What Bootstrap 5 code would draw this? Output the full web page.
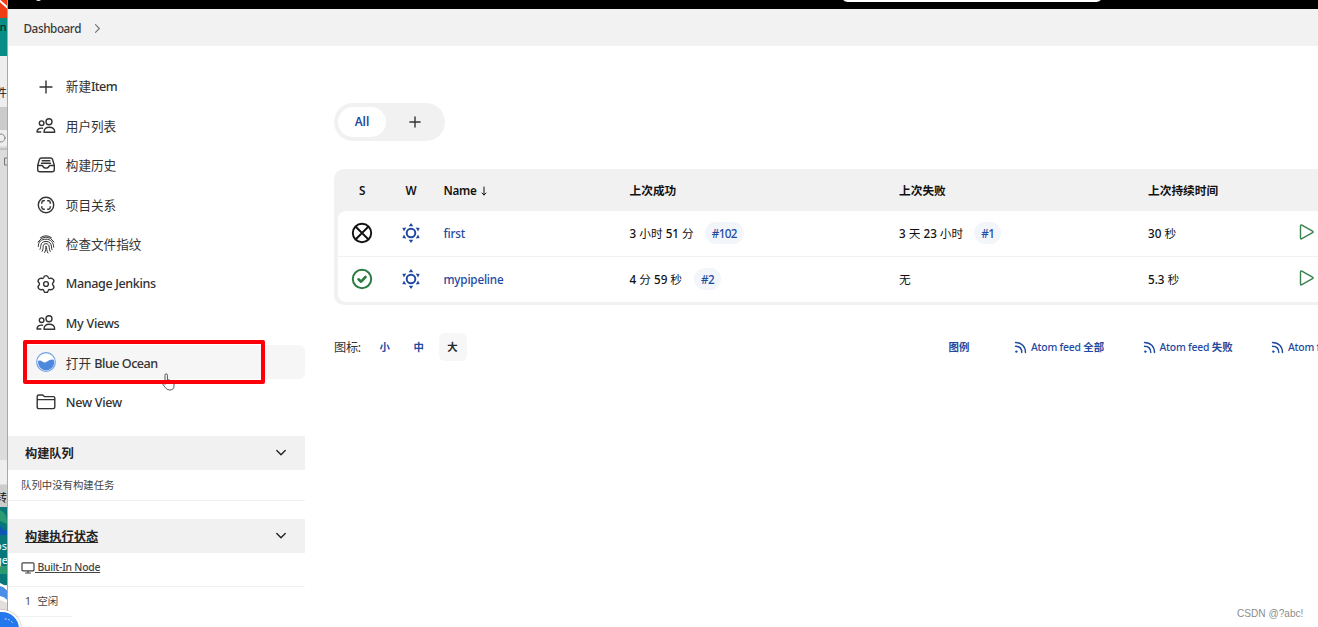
<!DOCTYPE html>
<html lang="zh-CN">
<head>
<meta charset="utf-8">
<title>Dashboard [Jenkins]</title>
<link href="https://cdn.jsdelivr.net/npm/bootstrap@5.3.0/dist/css/bootstrap.min.css" rel="stylesheet">
<style>
body{font-family:"Noto Sans","Noto Sans CJK SC",sans-serif;font-size:12.6px;line-height:1.4;color:#333;height:627px;overflow:hidden;background:#fff}
svg{fill:none;stroke:currentColor;stroke-width:1.4;stroke-linecap:round;stroke-linejoin:round;flex:none;display:block}
a{color:#1f4a9f;text-decoration:none}
.desk{width:8px;flex:none;overflow:hidden;border-right:1px solid #a9a9a9;background:#dcdcdc}
.desk svg{stroke:none}
.app{min-width:0;overflow:hidden}
.topbar{height:9px;background:#000;flex:none;position:relative;overflow:hidden}
.searchbox{position:absolute;left:833px;top:-22px;width:262px;height:24px;border-radius:7px;background:#fff}
.logo-bit{position:absolute;left:28px;top:-3px;width:5px;height:4px;border-radius:2px;background:#ddd}
.crumbs{height:37px;background:#f2f2f3;padding:1px 0 0 15.5px;font-size:11.7px;font-weight:500;flex:none;letter-spacing:-.42px;color:#3a3a3a}
.side{width:297px;flex:none;padding-top:21px}
.task{height:39.4px;padding:0 0 0 16px;color:#333}
.task .inner{height:34px;padding-left:11.5px;gap:10.3px;border-radius:6px;width:281px}
.task .inner>span{padding-top:1px}
.task.on .inner{background:#f6f6f6}
.en{font-weight:500;letter-spacing:-.4px}
.pane-h{height:34px;background:#f1f1f1;padding:0 18px 0 17px;font-size:12.2px;font-weight:600;color:#222}
.pane-h>span{padding-top:2px}
.pane-row{border-bottom:1px solid #f1f1f1;font-size:10.4px;padding:1px 0 0 13px;color:#444}
.main{padding:56.5px 0 0 29px;width:1120px;flex:none}
.tabs{height:38px;width:111px;border-radius:19px;background:#f1f1f1;padding:4px}
.tab-on{width:48px;height:30px;border-radius:15px;background:#fff;font-size:11.8px;font-weight:600}
.jobs{margin-top:28px;background:#f1f1f1;border-radius:10px;padding:0 4px 4px;height:136px;font-size:11.7px;color:#111}
.jrow{display:grid;grid-template-columns:48.5px 49px 194px 269.5px 249px 151px 1fr;align-items:center;background:#fff;height:45px;margin-bottom:1px}
.jrow.h{background:none;height:42px;font-weight:600;margin:0;padding-top:1px}
.jrow>:nth-child(-n+2){justify-self:center;margin-top:-1px}
.jrow.h>:nth-child(-n+2){margin-top:0}
.jrow>:nth-child(3){margin-left:8px}
.jrow>a{padding-top:1px;letter-spacing:-.2px;font-weight:500}
.jrow>svg:last-child{margin-top:-2px}
.jrow.a{border-radius:8px 8px 0 0}
.jrow.z{border-radius:0 0 8px 8px;margin:0}
.jrow b{font-weight:500;letter-spacing:0}
.num{background:#f2f5fa;border-radius:11px;padding:0 7px;height:22px;line-height:22px;margin-left:11px;display:inline-block;font-weight:500;letter-spacing:-.6px}
.foot{margin-top:28.500px;height:28px;font-size:10.4px;font-weight:600}
.foot>a,.foot>span:first-child{padding-top:1px}
.foot i{font-style:normal;letter-spacing:-.24px;font-weight:500}
.mark-box{position:absolute;left:23px;top:340px;width:242px;height:44px;border:4px solid #fc000a;border-radius:2px}
.hand{position:absolute;left:160px;top:372px}
.wm{position:absolute;left:1237px;top:606px;font:10.1px/15px "Liberation Sans",sans-serif;color:#8d8d8d;white-space:nowrap}
.ball{position:absolute;left:-17px;top:610px;width:38px;height:38px;border-radius:50%;background:#2378ee;border:2px solid #fff;box-shadow:0 0 2px #999}
.ball svg{position:absolute;left:18px;top:5px}
</style>
<script src="https://cdn.jsdelivr.net/npm/bootstrap@5.3.0/dist/js/bootstrap.bundle.min.js"></script>
</head>
<body class="d-flex position-relative">
<svg width="0" height="0" class="position-absolute"><defs>
<g id="people"><circle cx="5.600" cy="7.200" r="2.300"/><circle cx="13" cy="5.800" r="3"/><path d="M8 16.200c0-3.200 2-4.900 5.200-4.900s5.500 1.700 5.500 4.900zM6.500 12.200c-3.200-.4-5.500.8-5.500 3.800h3.800"/></g>
<g id="plus"><path d="M10 4v12M4 10h12"/></g>
<g id="sun"><circle cx="10" cy="10" r="4.300" stroke-width="2"/><g fill="currentColor" stroke="none"><path id="ray" d="M10 0l2.300 3.200H7.700z"/><use href="#ray" transform="rotate(60 10 10)"/><use href="#ray" transform="rotate(120 10 10)"/><use href="#ray" transform="rotate(180 10 10)"/><use href="#ray" transform="rotate(240 10 10)"/><use href="#ray" transform="rotate(300 10 10)"/></g></g>
<g id="feed"><path d="M1.500 1.500c6 0 10 4 10 10M1.500 5.200c4 0 6.300 2.300 6.300 6.300"/><circle cx="2.400" cy="10.600" r="1.200" fill="currentColor" stroke="none"/></g>
</defs></svg>
<div class="desk"><svg width="8" height="627" viewBox="0 0 8 627">
<path fill="#ef3d16" d="M0 0h8v18H0z"/><path d="M0 1l8 7" stroke="#fff" stroke-width="2"/>
<path fill="#078d85" d="M0 18h8v38H0z"/><path fill="#eee" d="M0 56h8v51H0z"/><path fill="#cbcbcb" d="M0 107h8v23H0z"/><path fill="#eee" d="M0 130h8v16H0z"/>
<circle cx="1" cy="138" r="4" stroke="#888" stroke-width="1"/><path d="M0 149h8" stroke="#aaa" stroke-width="1"/><path d="M8 158H4.500v7H8" stroke="#777" stroke-width="1"/>
<path fill="#eee" d="M0 460h8v24H0z"/><path fill="#ccc" d="M0 485h8v22H0z"/>
<path fill="#07777a" d="M0 507h8v78H0z"/><path fill="#2b9a70" d="M0 510q7 2 7 14l-7-3z"/><path fill="#0c55b5" d="M0 526q5 6 8 4v5H0z"/><path fill="#2b9a70" d="M0 566h8v8H0z"/>
<path fill="#fff" d="M0 583l8 4v40H0z"/><path fill="#4b8ee8" d="M0 586q5 1 8 6v9q-3-4-8-5z"/><path fill="#e4dfdd" d="M0 600l8 3v12H0z"/>
<g font-size="11" fill="#111"><text x="-3" y="31">in</text><text x="-4" y="97">件</text><text x="-4" y="502">转</text></g><g font-size="11" fill="#fff"><text x="-5" y="550">os</text><text x="-5" y="564">ge</text></g>
</svg></div>
<div class="app d-flex flex-column flex-grow-1">
<header class="topbar"><div class="logo-bit"></div><div class="searchbox"></div></header>
<nav class="crumbs d-flex align-items-center"><span>Dashboard</span><svg style="margin-left:14px;stroke-width:1.200;color:#777" width="5" height="9" viewBox="0 0 5 9"><path d="M.5.700l3.800 3.800L.5 8.300"/></svg></nav>
<div class="d-flex">
<aside class="side">
<a class="task d-flex align-items-center" href="#"><span class="inner d-flex align-items-center"><svg width="20" height="20"><use href="#plus"/></svg><span>新建<span class="en" style="letter-spacing:-.6px">Item</span></span></span></a>
<a class="task d-flex align-items-center" href="#"><span class="inner d-flex align-items-center"><svg width="20" height="20"><use href="#people"/></svg><span>用户列表</span></span></a>
<a class="task d-flex align-items-center" href="#"><span class="inner d-flex align-items-center"><svg width="20" height="20"><path d="M1.700 10.500l1.600-5.800Q3.800 3 5.600 3h8.800q1.800 0 2.300 1.700l1.600 5.800v4q0 2.200-2.200 2.200H3.900q-2.200 0-2.200-2.200zM1.700 10.500h4.800q.8 2.600 3.500 2.600t3.500-2.600h4.800M6.200 5.700h7.600M5.500 8.200h9"/></svg><span>构建历史</span></span></a>
<a class="task d-flex align-items-center" href="#"><span class="inner d-flex align-items-center"><svg width="20" height="20"><circle cx="10" cy="10" r="7.700"/><path d="M5.800 8.300V7.500q0-1.700 1.700-1.700h.8M11.700 5.800h.8q1.700 0 1.700 1.700v.8M14.200 11.700v.8q0 1.700-1.700 1.700h-.8M8.300 14.200h-.8q-1.700 0-1.700-1.700v-.8"/></svg><span>项目关系</span></span></a>
<a class="task d-flex align-items-center" href="#"><span class="inner d-flex align-items-center"><svg width="20" height="20" style="stroke-width:1"><path d="M4.500 3.700Q10-.3 15.500 3.700M2 8Q5.200 3 10 3t8 5M2.300 12.500C2 7.500 5.500 5.200 10 5.200s7.800 3.300 7.700 8M4 15.300c.8-1.500.6-2.500.8-3.800C5.200 8.800 7.200 7.400 10 7.400c3.500 0 5.500 2.500 5.500 5.600 0 1.300.3 2.300.5 2.800M6.200 17.300c1.100-2 .9-3.600 1-5C7.300 10.500 8.300 9.700 10 9.700c2 0 3.200 1.600 3.200 3.500 0 1.900.5 3.400 1 4.300M8.700 18.500c1.200-2.200 1.200-4.500 1.200-6.500 1 2.200.7 4.900 2 7"/></svg><span>检查文件指纹</span></span></a>
<a class="task d-flex align-items-center" href="#"><span class="inner d-flex align-items-center"><svg width="20" height="20"><circle cx="10" cy="10" r="2.400"/><path d="M7.600 3.700Q8 1.600 10 1.600t2.400 2.100q.5 1 1.700.6 2-.5 3.400 1.300 1.100 2-.6 3.300-.9 1.100 0 2.200 1.700 1.300.6 3.300-1.400 1.800-3.400 1.300-1.200-.4-1.700.6-.4 2.100-2.400 2.100t-2.400-2.100q-.5-1-1.700-.6-2 .5-3.400-1.300-1.100-2 .6-3.300.9-1.100 0-2.200-1.700-1.300-.6-3.300 1.400-1.800 3.400-1.300 1.200.4 1.700-.6z"/></svg><span class="en">Manage Jenkins</span></span></a>
<a class="task d-flex align-items-center" href="#"><span class="inner d-flex align-items-center"><svg width="20" height="20"><use href="#people"/></svg><span class="en" style="letter-spacing:-.28px">My Views</span></span></a>
<a class="task on d-flex align-items-center" href="#"><span class="inner d-flex align-items-center"><svg width="20" height="20"><circle cx="10" cy="10" r="9.300" fill="#fff" stroke="#72a0df" stroke-width="1.200"/><path d="M2.300 8.700q2.400-.8 4.300 1t4.900-.5 6.200-1.400A8 8 0 1 1 2.300 8.700z" fill="#4d88df" stroke="none"/></svg><span style="padding-top:2px">打开 <span class="en" style="letter-spacing:-.5px">Blue Ocean</span></span></span></a>
<a class="task d-flex align-items-center" href="#"><span class="inner d-flex align-items-center"><svg width="20" height="20"><path d="M1.200 4.500q0-1.500 1.500-1.500h4l1.700 1.600h8.900q1.500 0 1.500 1.500v9q0 1.500-1.500 1.500H2.700q-1.500 0-1.500-1.500zM1.200 7.600h17.600"/></svg><span class="en" style="letter-spacing:-.3px">New View</span></span></a>
<div class="pane-h d-flex align-items-center justify-content-between" style="margin-top:14.500px"><span>构建队列</span><svg width="12" height="8"><path d="M1.800 1.500L6 5.700l4.200-4.200"/></svg></div>
<div class="pane-row d-flex align-items-center" style="height:31px">队列中没有构建任务</div>
<div class="pane-h d-flex align-items-center justify-content-between" style="margin-top:18px"><span class="text-decoration-underline">构建执行状态</span><svg width="12" height="8"><path d="M1.800 1.500L6 5.700l4.200-4.200"/></svg></div>
<div class="pane-row d-flex align-items-center text-decoration-underline" style="height:33.500px;padding-bottom:4px"><svg width="14" height="14" style="stroke-width:1.200"><path d="M2 1.800h10q1 0 1 1v6q0 1-1 1H2q-1 0-1-1v-6q0-1 1-1zM4.500 12h5M7 10v2"/></svg><span style="white-space:pre;font-weight:500;letter-spacing:-.25px"> Built-In Node</span></div>
<div class="pane-row d-flex align-items-center" style="height:30.500px;padding-left:17px;width:64px"><span>1</span><span style="margin-left:6.500px">空闲</span></div>
</aside>
<main class="main">
<div class="tabs d-flex align-items-center"><a class="tab-on d-flex align-items-center justify-content-center" href="#">All</a><svg style="margin-left:19px" width="20" height="20"><path d="M10 4.900v10.200M4.900 10h10.200"/></svg></div>
<section class="jobs">
<div class="jrow h"><span>S</span><span>W</span><span style="letter-spacing:-.3px;font-weight:600">Name&nbsp;<svg class="d-inline-block" width="6" height="10" style="stroke-width:1;vertical-align:-1px;margin-left:2px"><path d="M3 1v8M1 7l2 2 2-2"/></svg></span><span>上次成功</span><span>上次失败</span><span>上次持续时间</span></div>
<div class="jrow a"><svg width="22" height="22" style="stroke-width:1.900"><circle cx="11" cy="11" r="9.200"/><path d="M5 5l12 12M17 5L5 17"/></svg><svg width="20" height="20" color="#2048a4"><use href="#sun"/></svg><a href="#">first</a><span><b>3</b> 小时 <b>51</b> 分<a class="num" href="#">#102</a></span><span><b>3</b> 天 <b>23</b> 小时<a class="num" href="#">#1</a></span><span><b>30</b> 秒</span><svg width="16" height="18" color="#388250"><path d="M1.500 3q0-1.600 1.400-.8l10.600 5.900q1.300.8 0 1.600L2.900 15.700q-1.400.8-1.400-.8z"/></svg></div>
<div class="jrow z"><svg width="22" height="22" style="stroke-width:2" color="#2c7b42"><circle cx="11" cy="11" r="9.200"/><path d="M7.500 11.300l2.600 2.400L14.500 9" stroke-width="2.600"/></svg><svg width="20" height="20" color="#2048a4"><use href="#sun"/></svg><a href="#">mypipeline</a><span><b>4</b> 分 <b>59</b> 秒<a class="num" href="#" style="margin-left:12px">#2</a></span><span>无</span><span><b>5.3</b> 秒</span><svg width="16" height="18" color="#388250"><path d="M1.500 3q0-1.600 1.400-.8l10.600 5.900q1.300.8 0 1.600L2.900 15.700q-1.400.8-1.400-.8z"/></svg></div>
</section>
<div class="foot d-flex align-items-center text-nowrap">
<span style="width:45.500px;font-size:12.200px;font-weight:400;letter-spacing:-.300px">图标:</span><a href="#" style="width:34px">小</a><a href="#" style="width:25px">中</a><span class="rounded d-flex align-items-center justify-content-center text-dark" style="width:28px;height:28px;background:#f7f7f7">大</span>
<a href="#" style="margin-left:482px;width:65.500px">图例</a>
<a href="#" class="d-flex align-items-center" style="width:128.500px;gap:4px"><svg width="13" height="13"><use href="#feed"/></svg><span><i>Atom feed</i> 全部</span></a>
<a href="#" class="d-flex align-items-center" style="width:128.500px;gap:4px"><svg width="13" height="13"><use href="#feed"/></svg><span><i>Atom feed</i> 失败</span></a>
<a href="#" class="d-flex align-items-center" style="gap:4px"><svg width="13" height="13"><use href="#feed"/></svg><span><i>Atom feed</i></span></a>
</div>
</main>
</div>
</div>
<svg class="hand" width="16" height="20" viewBox="0 0 16 20"><path d="M5 12V3.200Q5 1.800 6.200 1.800t1.200 1.400V8q2.200-.7 2.700.6 2-.5 2.300.7 1.600-.2 1.600 1.500v3q0 4.200-4.200 4.200-3 0-4.300-2.200L2.500 12q-.3-1.200 1-1z" fill="#fff" stroke="#555" stroke-width="1"/></svg>
<div class="mark-box"></div>
<div class="ball"><svg width="12" height="8" style="color:#b5d5ff;stroke-width:1"><path d="M2 2h1.500M5.500 2.500l1 .5M8.500 4.500l1 1"/></svg></div>
<div class="wm">CSDN @?abc!</div>
</body>
</html>
